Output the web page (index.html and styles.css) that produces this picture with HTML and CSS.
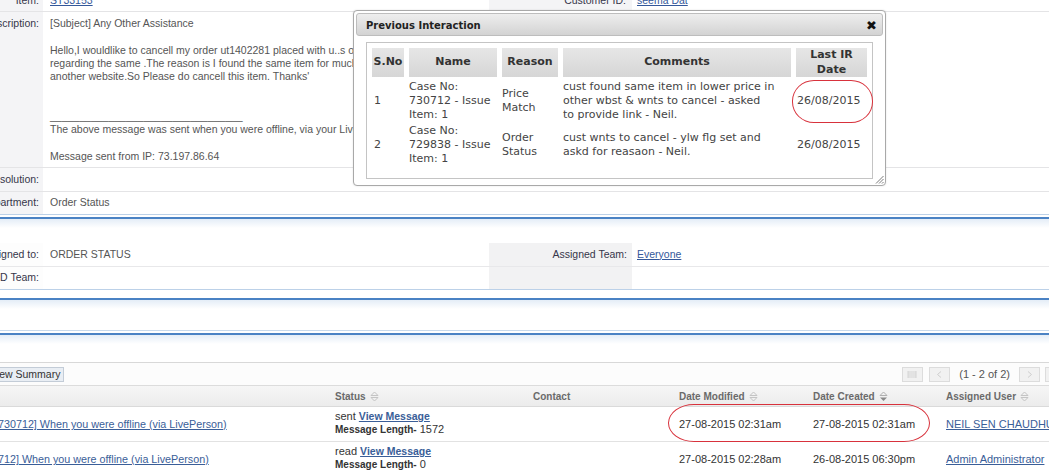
FILE: index.html
```html
<!DOCTYPE html>
<html>
<head>
<meta charset="utf-8">
<title>Case</title>
<link rel="stylesheet" href="styles.css">
</head>
<body>
<div class="page">
  <section class="form form-top">
    <div class="row row-item">
      <div class="lbl">Item:</div>
      <div class="val"><a href="#">ST33153</a></div>
      <div class="lbl lbl2">Customer ID:</div>
      <div class="val val2"><a href="#">seema Dat</a></div>
    </div>
    <div class="row row-desc">
      <div class="lbl">Description:</div>
      <div class="val span">[Subject] Any Other Assistance<br><br>Hello,I wouldlike to cancell my order ut1402281 placed with u..s on 26th. I need to talk to you<br>regarding the same .The reason is I found the same item for much lower price on<br>another website.So Please do cancell this item. Thanks'<br><br><br>_________________________________<br>The above message was sent when you were offline, via your LivePerson chat window.<br><br>Message sent from IP: 73.197.86.64</div>
    </div>
    <div class="row row-res">
      <div class="lbl">Resolution:</div>
      <div class="val span"></div>
    </div>
    <div class="row row-dept">
      <div class="lbl">Department:</div>
      <div class="val span">Order Status</div>
    </div>
  </section>

  <div class="sep sep1"></div>

  <section class="form form-assign">
    <div class="row row-a1">
      <div class="lbl">Assigned to:</div>
      <div class="val">ORDER STATUS</div>
      <div class="lbl lbl2">Assigned Team:</div>
      <div class="val val2"><a href="#">Everyone</a></div>
    </div>
    <div class="row row-a2">
      <div class="lbl">CD Team:</div>
      <div class="val"></div>
      <div class="lbl lbl2"></div>
      <div class="val val2"></div>
    </div>
  </section>

  <div class="sep sep2"></div>
  <div class="sep sep3"></div>

  <section class="grid">
    <div class="toolbar">
      <button class="btn-summary" type="button">View Summary</button>
      <div class="pager">
        <span class="pg"><svg width="11" height="7" viewBox="0 0 11 7"><path d="M1 0v7M2 0v7M4 0v7M6 0v7M8 0v7M9 0v7" stroke="#d4d4d4" stroke-width="1"/></svg></span>
        <span class="pg pg-gap"><svg width="7" height="7" viewBox="0 0 7 7"><path d="M5 0.5L1.5 3.5L5 6.5" fill="none" stroke="#cfcfcf"/></svg></span>
        <span class="pg-text">(1 - 2 of 2)</span>
        <span class="pg"><svg width="7" height="7" viewBox="0 0 7 7"><path d="M2 0.5L5.5 3.5L2 6.5" fill="none" stroke="#cfcfcf"/></svg></span>
        <span class="pg pg-last"><svg width="11" height="7" viewBox="0 0 11 7"><path d="M1 0v7M2 0v7M4 0v7M6 0v7M8 0v7M9 0v7" stroke="#d4d4d4" stroke-width="1"/></svg></span>
      </div>
    </div>
    <div class="grow ghead">
      <div class="gc"></div>
      <div class="gc">Status <svg class="sort" width="9" height="11" viewBox="0 0 9 11"><path d="M1 4.5L4.5 1L8 4.5ZM1 6.5L4.5 10L8 6.5Z" fill="none" stroke="#c4c4c4"/></svg></div>
      <div class="gc">Contact</div>
      <div class="gc">Date Modified <svg class="sort" width="9" height="11" viewBox="0 0 9 11"><path d="M1 4.5L4.5 1L8 4.5ZM1 6.5L4.5 10L8 6.5Z" fill="none" stroke="#c4c4c4"/></svg></div>
      <div class="gc">Date Created <svg class="sort" width="9" height="11" viewBox="0 0 9 11"><path d="M1 4.5L4.5 1L8 4.5Z" fill="none" stroke="#b0b0b0"/><path d="M1 6.5L4.5 10L8 6.5Z" fill="#8a8a8a"/></svg></div>
      <div class="gc">Assigned User <svg class="sort" width="9" height="11" viewBox="0 0 9 11"><path d="M1 4.5L4.5 1L8 4.5ZM1 6.5L4.5 10L8 6.5Z" fill="none" stroke="#c4c4c4"/></svg></div>
    </div>
    <div class="grow gdata">
      <div class="gc subj"><a href="#">[730712] When you were offline (via LivePerson)</a></div>
      <div class="gc status"><div>sent <a class="vm" href="#">View Message</a></div><div><b>Message Length-</b> 1572</div></div>
      <div class="gc"></div>
      <div class="gc">27-08-2015 02:31am</div>
      <div class="gc">27-08-2015 02:31am</div>
      <div class="gc"><a href="#">NEIL SEN CHAUDHURI</a></div>
    </div>
    <div class="grow gdata">
      <div class="gc subj"><a href="#">[712] When you were offline (via LivePerson)</a></div>
      <div class="gc status"><div>read <a class="vm" href="#">View Message</a></div><div><b>Message Length-</b> 0</div></div>
      <div class="gc"></div>
      <div class="gc">27-08-2015 02:28am</div>
      <div class="gc">26-08-2015 06:30pm</div>
      <div class="gc"><a href="#">Admin Administrator</a></div>
    </div>
  </section>

  <div class="dialog">
    <div class="dlg-title"><span>Previous Interaction</span><span class="dlg-close">✖</span></div>
    <div class="dlg-body">
      <table class="pi">
        <colgroup><col class="c-no"><col class="c-name"><col class="c-reason"><col class="c-com"><col class="c-date"></colgroup>
        <thead>
          <tr><th>S.No</th><th>Name</th><th>Reason</th><th>Comments</th><th>Last IR<br>Date</th></tr>
        </thead>
        <tbody>
          <tr class="r1"><td class="no">1</td><td>Case No:<br>730712 - Issue<br>Item: 1</td><td>Price<br>Match</td><td>cust found same item in lower price in<br>other wbst &amp; wnts to cancel - asked<br>to provide link - Neil.</td><td class="dt">26/08/2015</td></tr>
          <tr class="r2"><td class="no">2</td><td>Case No:<br>729838 - Issue<br>Item: 1</td><td>Order<br>Status</td><td>cust wnts to cancel - ylw flg set and<br>askd for reasaon - Neil.</td><td class="dt">26/08/2015</td></tr>
        </tbody>
      </table>
    </div>
    <svg class="grip" width="9" height="9" viewBox="0 0 9 9"><path d="M8.5 1L1 8.5M8.5 4L4 8.5M8.5 7L7 8.5" stroke="#7a7a7a" stroke-width="1"/></svg>
  </div>

  <div class="mark mark1"></div>
  <div class="mark mark2"></div>
</div>
</body>
</html>
```

FILE: styles.css
```css
* { box-sizing: border-box; margin: 0; padding: 0; }
html, body { width: 1049px; height: 472px; overflow: hidden; background: #fff; }
body { font-family: "Liberation Sans", Arial, sans-serif; color: #555; }
a { color: #34589a; text-decoration: underline; }

.page { position: relative; width: 1049px; height: 472px; overflow: hidden; }

/* form tables */
.form { margin-left: -57px; width: 1120px; }
.row {
  display: grid;
  grid-template-columns: 100px 446px 143px 1fr;
  border-bottom: 1px solid #e4e4e6;
  font-size: 10.5px;
  line-height: 13.3px;
}
.row > div { display: flex; align-items: center; white-space: nowrap; overflow: hidden; }
.lbl { justify-content: flex-end; padding-right: 4px; color: #36364a; background: #f4f4f6; }
.val { padding-left: 7px; }
.lbl2 { padding-right: 6px; }
.val2 { padding-left: 5px; }
.span { grid-column: 2 / -1; }

.row-item { height: 22px; margin-top: -10px; }
.row-desc { height: 156px; }
.row-desc > div { align-items: flex-start; padding-top: 5px; }
.row-desc .val { display: block; }
.row-res { height: 24px; }
.row-dept { height: 23px; border-bottom-color: #bcd1e8; }

.form-assign .lbl { background: #fdfdfd; }
.form-assign .lbl2 { background: #f2f2f3; padding-right: 5px; }
.row-a1 { height: 24px; border-bottom-color: #e8e8ea; }
.row-a2 { height: 23px; border-bottom-color: #bcd1e8; }

/* panel separators */
.sep {
  border-top: 2px solid #4a82c4;
  background: linear-gradient(#e4edf7, #ffffff 9px);
}
.sep1 { margin-top: 2px; height: 26px; }
.sep2 { margin-top: 8px; height: 33px; border-bottom: 1px solid #c7d9ec; }
.sep3 { margin-top: 2px; height: 29px; }

/* grid */
.grid { margin-left: -9px; width: 1079px; border-top: 1px solid #d8d8d8; font-size: 11px; color: #333; }
.toolbar {
  height: 23px;
  display: flex;
  align-items: center;
  justify-content: space-between;
  padding-right: 4px;
  border-bottom: 1px solid #dcdcdc;
  background: #fcfcfc;
}
.btn-summary {
  margin-left: -5px;
  height: 15px;
  padding: 0 3px;
  border: 1px solid #c3ccd7;
  background: #e9eef4;
  font-family: "Liberation Sans", Arial, sans-serif;
  font-size: 10.5px;
  line-height: 13px;
  color: #333;
}
.pager { display: flex; align-items: center; }
.pg {
  width: 21px;
  height: 15px;
  border: 1px solid #dcdcdc;
  background: #f1f1f1;
  display: flex;
  align-items: center;
  justify-content: center;
}
.pg-gap { margin-left: 6px; }
.pg-text { margin: 0 9px; color: #555; font-size: 11px; }
.pg-last { margin-left: 5px; }

.grow {
  display: grid;
  grid-template-columns: 339px 198px 146px 134px 133px 1fr;
  border-bottom: 1px solid #e2e2e2;
}
.gc { padding-left: 5px; display: flex; align-items: center; white-space: nowrap; overflow: hidden; }
.ghead {
  height: 21px;
  background: linear-gradient(#f6f6f6, #ececec);
  border-bottom-color: #dadada;
  font-weight: bold;
  font-size: 10px;
  color: #6a6a6a;
}
.sort { margin-left: 4px; }
.gdata { height: 35px; }
.gdata a { color: #3a5e98; }
.subj { padding-left: 4px; font-size: 10.75px; }
.status { flex-direction: column; align-items: flex-start; justify-content: flex-start; padding-top: 3px; line-height: 13px; }
.status b { font-size: 10px; }
.vm { font-weight: bold; font-size: 10.5px; color: #3a67a6; }

/* dialog */
.dialog {
  position: absolute;
  left: 353px;
  top: 10px;
  width: 533px;
  height: 176px;
  border: 1px solid #a9a9a9;
  border-radius: 4px;
  background: #fff;
  padding: 2px;
  box-shadow: 0 0 2px rgba(0, 0, 0, 0.12);
  font-family: "DejaVu Sans", Verdana, sans-serif;
}
.dlg-title {
  height: 23px;
  border: 1px solid #bdbdbd;
  border-radius: 3px;
  background: linear-gradient(#eeeeee, #d3d3d3);
  display: flex;
  align-items: center;
  justify-content: space-between;
  padding: 1px 5px 0 9px;
  font-weight: bold;
  font-size: 10px;
  color: #222;
}
.dlg-close { font-size: 13px; color: #111; }
.dlg-body {
  margin: 6px 10px 0 10px;
  height: 137px;
  border: 1px solid #c4c4c4;
}
.pi {
  table-layout: fixed;
  width: 505px;
  border-collapse: separate;
  border-spacing: 5px 0;
  margin-top: 5px;
  font-size: 11px;
  line-height: 14px;
  color: #444;
}
.c-no { width: 32px; }
.c-name { width: 88px; }
.c-reason { width: 56px; }
.c-com { width: 228px; }
.c-date { width: 71px; }
.pi th {
  height: 29px;
  background: linear-gradient(#e6e6e6, #d6d6d6);
  font-weight: bold;
  color: #333;
  text-align: center;
  line-height: 14.5px;
  padding: 0;
}
.pi td { text-align: left; vertical-align: middle; padding: 0; }
.pi .r1 td { padding-top: 3px; }
.pi .r2 td { padding-top: 2px; }
.pi td.no { padding-left: 2px; }
.pi td.dt { padding-left: 1px; }
.grip { position: absolute; right: 1px; bottom: 1px; }

/* red annotation circles */
.mark { position: absolute; border: 1px solid #d8323c; }
.mark1 { left: 792px; top: 80px; width: 81px; height: 43px; border-radius: 22px / 21px; }
.mark2 { left: 668px; top: 404px; width: 262px; height: 38px; border-radius: 26px / 19px; }
```
